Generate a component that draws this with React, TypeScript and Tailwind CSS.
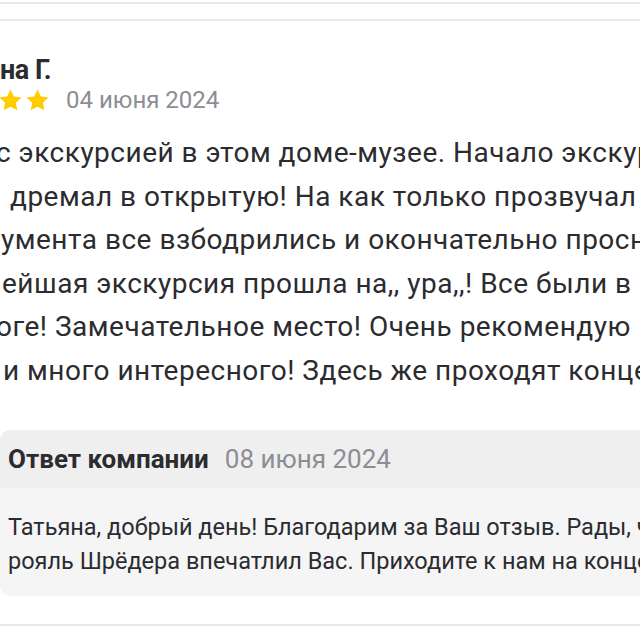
const font = { fontFamily: "Roboto, 'Liberation Sans', sans-serif" };

function Star() {
  return (
    <svg viewBox="0 0 24 24" className="h-[23px] w-[23px] shrink-0">
      <path
        d="M12 0.5l3.5 7.3 8 1-5.9 5.5 1.5 8L12 18.4l-7.1 3.9 1.5-8L.5 8.8l8-1z"
        fill="#fc0"
      />
    </svg>
  );
}

const lines = [
  { text: "с экскурсией в этом доме-музее. Начало экскурсии", x: "-ml-[4px]" },
  { text: "дремал в открытую! На как только прозвучал звук", x: "ml-[10px]" },
  { text: "умента все взбодрились и окончательно проснулись", x: "ml-[1px]" },
  { text: "ейшая экскурсия прошла на,, ура,,! Все были в", x: "ml-[2px]" },
  { text: "оге! Замечательное место! Очень рекомендую", x: "-ml-[4px]" },
  { text: "и много интересного! Здесь же проходят концерты", x: "ml-[3px]" },
];

export default function App() {
  return (
    <div
      className="h-[640px] w-[640px] overflow-hidden bg-white text-[#2b2b30]"
      style={font}
    >
      <div className="mt-[2px] h-[2px] bg-[#e7e7ec]" />
      <div className="mt-[15px] h-[2px] bg-[#e7e7ec]" />

      <div className="mt-[34px] whitespace-nowrap">
        <div className="text-[27px] font-bold leading-[30px] tracking-[-0.5px]">
          на Г.
        </div>
        <div className="flex h-[30px] items-center">
          <div className="-ml-[1px] flex gap-[4px]">
            <Star />
            <Star />
          </div>
          <span className="ml-[17px] text-[24px] text-[#8d8d94]">
            04 июня 2024
          </span>
        </div>

        <div className="mt-[16px] text-[28px] leading-[43.5px] tracking-[0.5px]">
          {lines.map((l) => (
            <div key={l.text} className={l.x}>
              {l.text}
            </div>
          ))}
        </div>

        <div className="mt-[38px] overflow-hidden rounded-l-[10px] bg-[#f5f5f5]">
          <div className="flex h-[58px] items-center gap-[16px] bg-[#efefef] pl-[8px]">
            <span className="text-[26px] font-bold">Ответ компании</span>
            <span className="text-[26px] text-[#8d8d94]">08 июня 2024</span>
          </div>
          <div className="pl-[8px] pt-[22px] pb-[18px] text-[23.5px] leading-[34px]">
            <div>Татьяна, добрый день! Благодарим за Ваш отзыв. Рады, что</div>
            <div>рояль Шрёдера впечатлил Вас. Приходите к нам на концерты!</div>
          </div>
        </div>
      </div>
      <div className="mt-[28px] h-[2px] bg-[#e7e7ec]" />
    </div>
  );
}
